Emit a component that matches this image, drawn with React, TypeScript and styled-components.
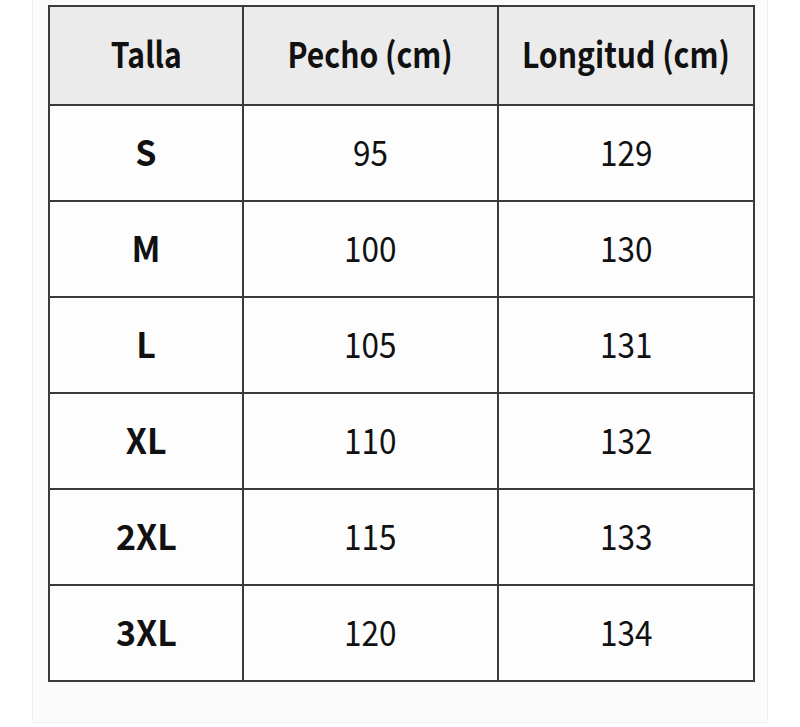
import React from 'react';
import styled, { createGlobalStyle } from 'styled-components';

const rows = [
  { size: 'S', chest: 95, length: 129 },
  { size: 'M', chest: 100, length: 130 },
  { size: 'L', chest: 105, length: 131 },
  { size: 'XL', chest: 110, length: 132 },
  { size: '2XL', chest: 115, length: 133 },
  { size: '3XL', chest: 120, length: 134 },
];

const Global = createGlobalStyle`
  body {
    margin: 0;
    background: #ffffff;
    font-family: "Noto Sans CJK SC", "Noto Sans", sans-serif;
  }
`;

const Card = styled.div`
  margin-left: 32px;
  width: 736px;
  height: 723px;
  box-sizing: border-box;
  padding: 5px 0 0 15px;
  background: #fbfbfb;
  border: 1px solid #efefef;
  border-top: none;
`;

const Table = styled.table`
  width: 705px;
  border-collapse: collapse;
  table-layout: fixed;
  color: #111;
`;

const Head = styled.th`
  height: 99px;
  box-sizing: border-box;
  background: #ebebeb;
  border: 2px solid #3a3a3a;
  font-size: 35px;
  font-weight: 700;
  text-align: center;
  padding: 0 0 6px;
`;

const Cell = styled.td<{ $bold?: boolean }>`
  height: 96px;
  box-sizing: border-box;
  border: 2px solid #3a3a3a;
  background: #fdfdfd;
  text-align: center;
  padding: 0 0 5px;
  font-size: 35px;
  font-weight: ${p => (p.$bold ? 700 : 400)};
`;

const Text = styled.span<{ $sx: number }>`
  display: inline-block;
  white-space: nowrap;
  transform: scaleX(${p => p.$sx});
`;

export default function App() {
  return (
    <>
      <Global />
      <Card>
        <Table>
          <colgroup>
            <col style={{ width: 194 }} />
            <col style={{ width: 255 }} />
            <col style={{ width: 256 }} />
          </colgroup>
          <thead>
            <tr>
              <Head><Text $sx={0.86}>Talla</Text></Head>
              <Head><Text $sx={0.86}>Pecho (cm)</Text></Head>
              <Head><Text $sx={0.86}>Longitud (cm)</Text></Head>
            </tr>
          </thead>
          <tbody>
            {rows.map(r => (
              <tr key={r.size}>
                <Cell $bold><Text $sx={0.97}>{r.size}</Text></Cell>
                <Cell><Text $sx={0.9}>{r.chest}</Text></Cell>
                <Cell><Text $sx={0.9}>{r.length}</Text></Cell>
              </tr>
            ))}
          </tbody>
        </Table>
      </Card>
    </>
  );
}
